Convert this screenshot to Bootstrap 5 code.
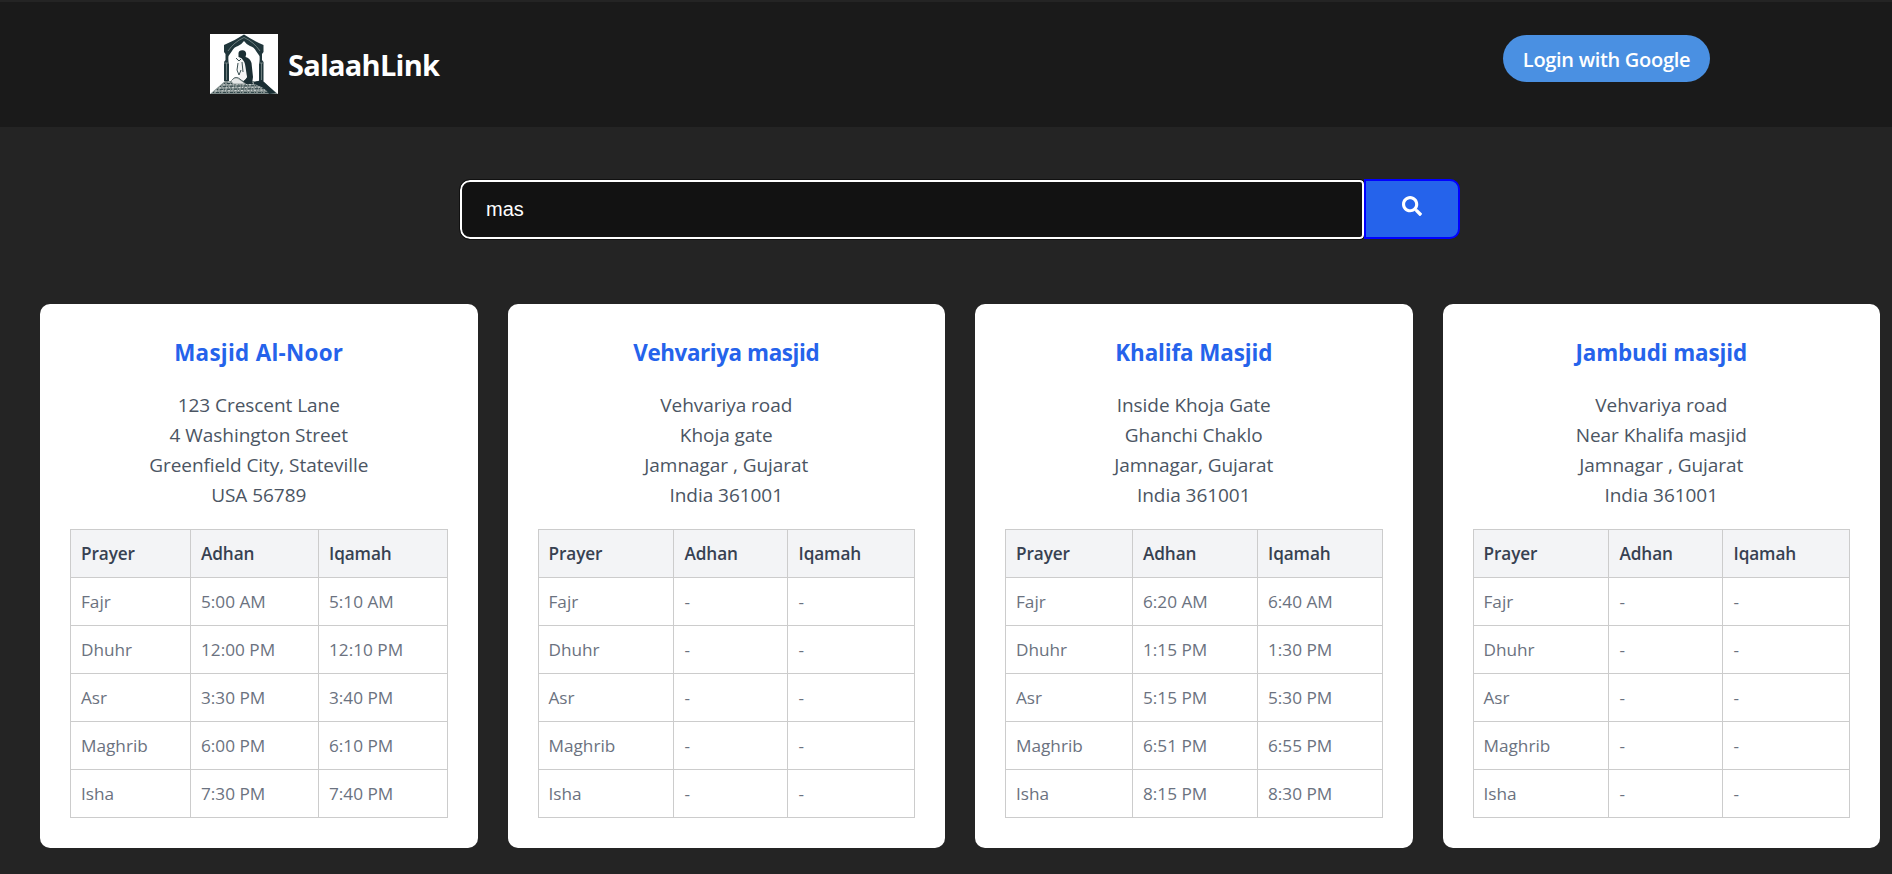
<!DOCTYPE html>
<html lang="en">
<head>
<meta charset="utf-8">
<meta name="viewport" content="width=device-width, initial-scale=1">
<title>SalaahLink</title>
<link rel="stylesheet" href="https://cdn.jsdelivr.net/npm/bootstrap@5.3.0/dist/css/bootstrap.min.css">
<style>
body{background:#242424;font-family:"Open Sans","Noto Sans",sans-serif;overflow:hidden;border-top:2px solid #242424}
.site-header{background:#1a1a1a;height:125px;padding:0 182px 0 210px}
.site-logo{margin-bottom:1px}
.site-name{font-size:29px;font-weight:700;letter-spacing:-.75px;margin-left:10px;line-height:44px}
.login-btn,.login-btn:hover{background:#4a90e2;color:#fff;width:207px;height:47px;border:0;border-radius:24px;padding:2px 0 0;font-size:20px;font-weight:600;letter-spacing:-.3px;margin-bottom:12px;white-space:nowrap}
.search-bar{width:1000px;height:60px;margin:52px 0 65px 460px}
.search-input,.search-input:focus{background:#121212;color:#fff;border:2px solid #fff;border-radius:10px 4px 4px 10px;outline:1px solid #101010;font:20px "Liberation Sans",sans-serif;padding:0 24px;height:59px;margin-top:1px;width:904px;box-shadow:none}
.search-btn,.search-btn:hover{background:#2563eb;border:2px solid #0000ff;border-radius:0 10px 10px 0;width:96px;height:60px;padding:0 0 7px}
.masjid-grid{display:grid;grid-template-columns:repeat(4,437.5px);gap:30px;padding-left:40px}
.masjid-card{border:0;border-radius:10px;padding:30px;height:544px}
.masjid-title{font-size:22.4px;font-weight:700;line-height:36px;margin:0;padding:1px 0 19px;color:#2563eb}
.address-lines{font-size:19px;line-height:30px;letter-spacing:-.05px;color:#4b5563;margin:0 0 19px}
.times{table-layout:fixed;width:377.5px;border-collapse:collapse;font-size:17.2px;line-height:27px;color:#6b7280;text-align:left}
.times th,.times td{border:1px solid #ccc;padding:10px}
.times th{background:#f3f4f6;color:#374151;font-weight:600;letter-spacing:-.1px}
.c1{width:120px}.c2{width:128px}.d1{width:135px}.d2{width:114px}.e1{width:127px}.e2{width:125px}
.unset-times th:not(:first-child),.unset-times td:not(:first-child){padding-left:11px}
</style>
</head>
<body>
<header class="site-header d-flex align-items-center justify-content-between">
  <a class="d-flex align-items-center text-decoration-none text-white" href="#">
    <svg class="site-logo" width="68" height="60" viewBox="0 0 68 60" aria-label="SalaahLink logo">
      <rect width="68" height="60" fill="#fff"/>
      <path d="M14 47V28L15.500 26V20L14 18V11Q24 7 34 .5Q44 7 53.500 11V18L52 20V26L53.500 28V47H49V30Q50 27 49.500 22L46 17Q44 13 40 12Q36 10 34 7Q32 10 28 12Q24 13 22 17L18.500 22Q18 27 19 30V47Z" fill="#20363b"/>
      <path d="M18 17Q24 8 34 3.500Q44 8 50 17M16.500 29V46M51.500 29V46M14 29H19M49 29H54" fill="none" stroke="#82908f" stroke-width=".8"/>
      <path d="M15 47H52L68 60H0Z" fill="#7f8c8b"/>
      <path d="M18 48l33 0M13 51l38-1M9 54l45-1M5 57l54-1" stroke="#d5dad9" stroke-width="1" stroke-dasharray="2 1.500 1 2" fill="none"/>
      <path d="M14 49.500H50M10 52.500L53 51.500M7 55.500L56 54.500M3 58.500H62" stroke="#34494c" stroke-width="1" stroke-dasharray="1 2 3 1" fill="none"/>
      <path d="M44 48L52 46L66 59L59 60Q55 53 44 50Z" fill="#192e33"/>
      <path d="M28.500 19Q29 16 32.500 16.200Q36 16.500 36.200 20L35.500 23Q40 24 41.500 29L43 43L42 50H28Q35 47 37 43Q33 36 34 29L31 24L28.500 23Z" fill="#1b2e33"/>
      <path d="M31 24Q35 27 35.500 33L37 43L31 48Q28 44 30 38Q27 34 28 29L25.500 25Z" fill="#f4f5f5"/>
      <path d="M26 24L29 27L31 25M28 29L27 36L29 41L31 36M32 28L33 38M22 46Q26 41 31 46L34 48" fill="none" stroke="#394e51" stroke-width="1"/>
      <path d="M21 47Q25 42 29 45L36 50H23Z" fill="#e6e8e8" stroke="#61706f" stroke-width=".6"/>
    </svg>
    <span class="site-name">SalaahLink</span>
  </a>
  <button class="btn login-btn" type="button">Login with Google</button>
</header>
<form class="search-bar d-flex">
  <input class="search-input" type="text" value="mas" aria-label="Search">
  <button class="btn search-btn d-flex align-items-center justify-content-center" type="button" aria-label="Search">
    <svg width="20" height="20" viewBox="0 0 512 512" fill="#fff"><path d="M505 442.700L405.300 343c-4.500-4.500-10.600-7-17-7H372c27.600-35.300 44-79.700 44-128C416 93.100 322.900 0 208 0S0 93.100 0 208s93.100 208 208 208c48.300 0 92.700-16.400 128-44v16.300c0 6.400 2.500 12.500 7 17l99.700 99.700c9.400 9.400 24.600 9.400 33.900 0l28.300-28.300c9.400-9.400 9.400-24.600.1-34zM208 336c-70.700 0-128-57.200-128-128 0-70.700 57.200-128 128-128 70.700 0 128 57.200 128 128 0 70.700-57.200 128-128 128z"/></svg>
  </button>
</form>
<main class="masjid-grid">
  <section class="card masjid-card text-center">
    <h2 class="masjid-title" style="letter-spacing:.3px">Masjid Al-Noor</h2>
    <p class="address-lines">123 Crescent Lane<br>4 Washington Street<br>Greenfield City, Stateville<br>USA 56789</p>
    <table class="times"><colgroup><col class="c1"><col class="c2"><col></colgroup>
      <thead><tr><th>Prayer</th><th>Adhan</th><th>Iqamah</th></tr></thead>
      <tbody>
        <tr><td>Fajr</td><td>5:00 AM</td><td>5:10 AM</td></tr>
        <tr><td>Dhuhr</td><td>12:00 PM</td><td>12:10 PM</td></tr>
        <tr><td>Asr</td><td>3:30 PM</td><td>3:40 PM</td></tr>
        <tr><td>Maghrib</td><td>6:00 PM</td><td>6:10 PM</td></tr>
        <tr><td>Isha</td><td>7:30 PM</td><td>7:40 PM</td></tr>
      </tbody></table>
  </section>
  <section class="card masjid-card text-center">
    <h2 class="masjid-title" style="letter-spacing:-.4px">Vehvariya masjid</h2>
    <p class="address-lines">Vehvariya road<br>Khoja gate<br>Jamnagar , Gujarat<br>India 361001</p>
    <table class="times unset-times"><colgroup><col class="d1"><col class="d2"><col></colgroup>
      <thead><tr><th>Prayer</th><th>Adhan</th><th>Iqamah</th></tr></thead>
      <tbody>
        <tr><td>Fajr</td><td>-</td><td>-</td></tr>
        <tr><td>Dhuhr</td><td>-</td><td>-</td></tr>
        <tr><td>Asr</td><td>-</td><td>-</td></tr>
        <tr><td>Maghrib</td><td>-</td><td>-</td></tr>
        <tr><td>Isha</td><td>-</td><td>-</td></tr>
      </tbody></table>
  </section>
  <section class="card masjid-card text-center">
    <h2 class="masjid-title" style="letter-spacing:-.1px">Khalifa Masjid</h2>
    <p class="address-lines">Inside Khoja Gate<br>Ghanchi Chaklo<br>Jamnagar, Gujarat<br>India 361001</p>
    <table class="times"><colgroup><col class="e1"><col class="e2"><col></colgroup>
      <thead><tr><th>Prayer</th><th>Adhan</th><th>Iqamah</th></tr></thead>
      <tbody>
        <tr><td>Fajr</td><td>6:20 AM</td><td>6:40 AM</td></tr>
        <tr><td>Dhuhr</td><td>1:15 PM</td><td>1:30 PM</td></tr>
        <tr><td>Asr</td><td>5:15 PM</td><td>5:30 PM</td></tr>
        <tr><td>Maghrib</td><td>6:51 PM</td><td>6:55 PM</td></tr>
        <tr><td>Isha</td><td>8:15 PM</td><td>8:30 PM</td></tr>
      </tbody></table>
  </section>
  <section class="card masjid-card text-center">
    <h2 class="masjid-title" style="letter-spacing:-.1px">Jambudi masjid</h2>
    <p class="address-lines">Vehvariya road<br>Near Khalifa masjid<br>Jamnagar , Gujarat<br>India 361001</p>
    <table class="times unset-times"><colgroup><col class="d1"><col class="d2"><col></colgroup>
      <thead><tr><th>Prayer</th><th>Adhan</th><th>Iqamah</th></tr></thead>
      <tbody>
        <tr><td>Fajr</td><td>-</td><td>-</td></tr>
        <tr><td>Dhuhr</td><td>-</td><td>-</td></tr>
        <tr><td>Asr</td><td>-</td><td>-</td></tr>
        <tr><td>Maghrib</td><td>-</td><td>-</td></tr>
        <tr><td>Isha</td><td>-</td><td>-</td></tr>
      </tbody></table>
  </section>
</main>
<script src="https://cdn.jsdelivr.net/npm/bootstrap@5.3.0/dist/js/bootstrap.bundle.min.js"></script>
</body>
</html>
